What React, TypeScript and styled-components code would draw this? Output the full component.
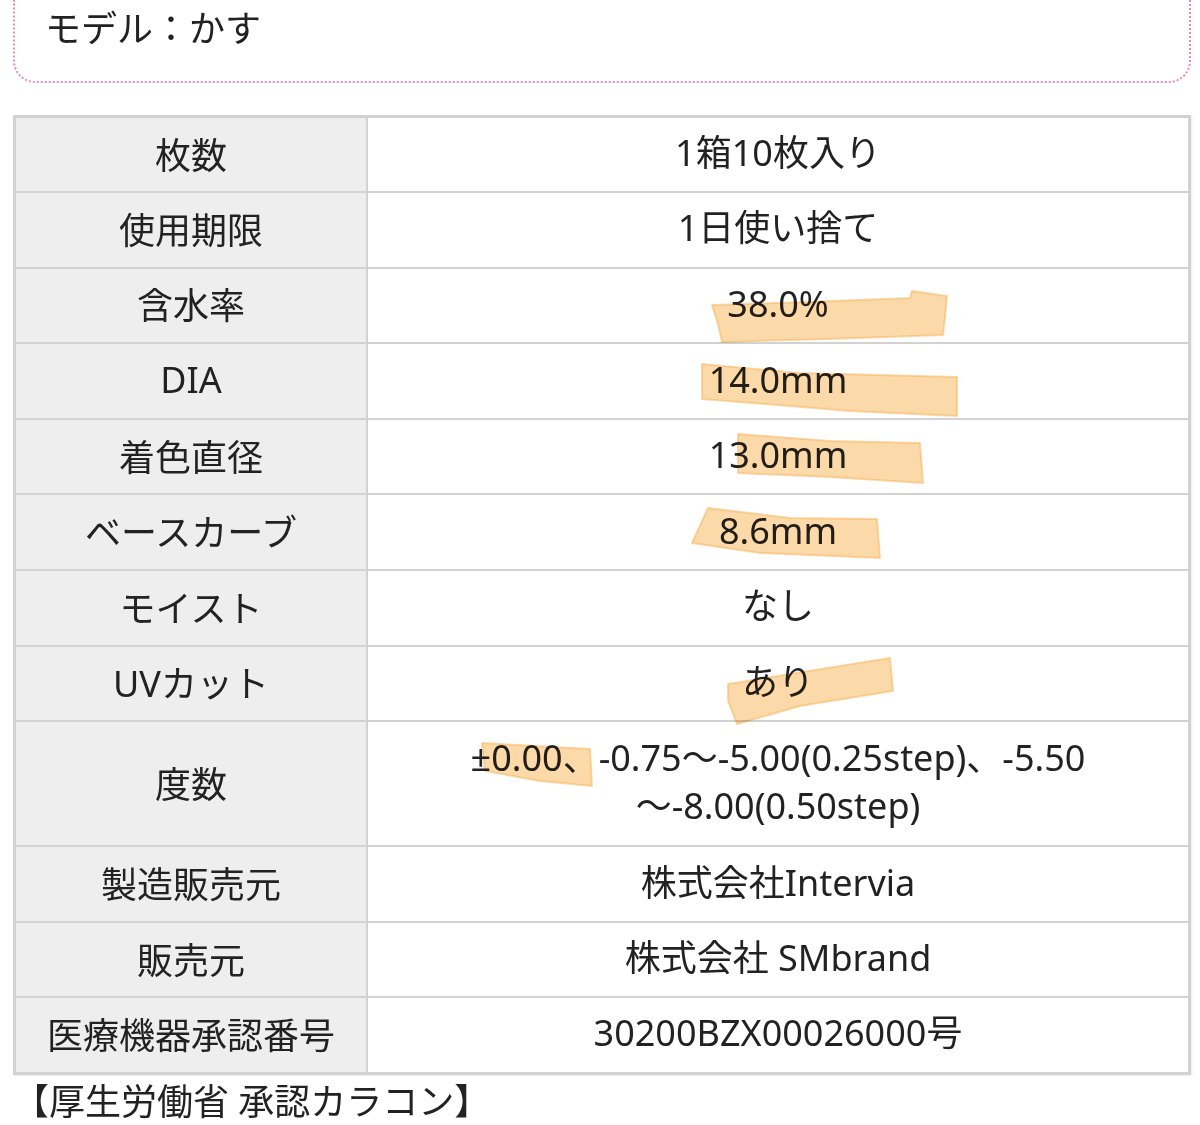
import React from 'react';
import styled, { createGlobalStyle } from 'styled-components';

const COLORS = {
    text: '#222222',
    label: '#eeeeee',
    line: '#d2d2d2',
    pink: '#e48bbd',
    marker: 'rgba(250, 186, 96, 0.55)',
    markerEdge: 'rgba(246, 170, 70, 0.45)',
};

const GlobalStyle = createGlobalStyle`
    html, body {
        margin: 0;
        padding: 0;
        background: #ffffff;
    }
    body {
        font-family: "Noto Sans", "Noto Sans CJK JP", sans-serif;
        color: ${COLORS.text};
    }
`;

const Page = styled.div`
    width: 1200px;
    padding: 0 9px 0 13px;
    box-sizing: border-box;
`;

const ModelBox = styled.div`
    border: 2px dotted ${COLORS.pink};
    border-top: none;
    border-radius: 0 0 22px 22px;
    padding: 5px 30px 0 30px;
    height: 83px;
    box-sizing: border-box;
    font-size: 36px;
    line-height: 48px;
`;

const SpecTable = styled.table`
    margin-top: 32px;
    width: 1178px;
    border-collapse: collapse;
    border: 3px solid ${COLORS.line};
    box-shadow: 1px 1px 2px rgba(0, 0, 0, 0.08);
    font-size: 36px;
`;

const Row = styled.tr<{ $tall?: boolean }>`
    height: ${(p) => (p.$tall ? 125 : 75.6)}px;
`;

const LabelCell = styled.th`
    width: 350px;
    background: ${COLORS.label};
    border: 2px solid ${COLORS.line};
    font-weight: 400;
    text-align: center;
    padding: 0 0 3px 0;
`;

const ValueCell = styled.td`
    position: relative;
    border: 2px solid ${COLORS.line};
    text-align: center;
    padding: 0 10px 3px 10px;
    line-height: 48px;
`;

const MarkerLayer = styled.svg`
    position: absolute;
    top: 0;
    left: 0;
    width: 100%;
    height: 100%;
    overflow: visible;
    pointer-events: none;
    mix-blend-mode: multiply;
`;

const Footer = styled.div`
    margin-top: 4px;
    font-size: 36px;
    line-height: 46px;
`;

interface Spec {
    label: string;
    value: React.ReactNode;
    marker?: string;
    tall?: boolean;
}

const SPECS: Spec[] = [
    { label: '枚数', value: '1箱10枚入り' },
    { label: '使用期限', value: '1日使い捨て' },
    {
        label: '含水率',
        value: '38.0%',
        marker: '344,36 440,33 542,29 544,22 579,27 577,48 575,66 460,70 354,73 350,55',
    },
    { label: 'DIA', value: '14.0mm', marker: '334,20 432,29 589,33 589,72 482,67 334,55' },
    { label: '着色直径', value: '13.0mm', marker: '370,14 462,21 552,23 555,63 462,57 370,53' },
    { label: 'ベースカーブ', value: '8.6mm', marker: '340,13 422,23 509,24 512,63 392,58 324,48' },
    { label: 'モイスト', value: 'なし' },
    { label: 'UVカット', value: 'あり', marker: '360,37 522,11 525,44 432,59 369,77 360,54' },
    {
        label: '度数',
        value: (
            <>
                ±0.00、-0.75～-5.00(0.25step)、-5.50
                <br />
                ～-8.00(0.50step)
            </>
        ),
        marker: '114,21 222,27 224,64 172,59 117,49',
        tall: true,
    },
    { label: '製造販売元', value: '株式会社Intervia' },
    { label: '販売元', value: '株式会社 SMbrand' },
    { label: '医療機器承認番号', value: '30200BZX00026000号' },
];

export default function App() {
    return (
        <>
            <GlobalStyle />
            <Page>
                <ModelBox>モデル：かす</ModelBox>

                <SpecTable>
                    <tbody>
                        {SPECS.map((spec) => (
                            <Row key={spec.label} $tall={spec.tall}>
                                <LabelCell>{spec.label}</LabelCell>
                                <ValueCell>
                                    {spec.value}
                                    {spec.marker && (
                                        <MarkerLayer>
                                            <polygon
                                                points={spec.marker}
                                                fill={COLORS.marker}
                                                stroke={COLORS.markerEdge}
                                                strokeWidth={2}
                                                strokeLinejoin="round"
                                            />
                                        </MarkerLayer>
                                    )}
                                </ValueCell>
                            </Row>
                        ))}
                    </tbody>
                </SpecTable>

                <Footer>【厚生労働省 承認カラコン】</Footer>
            </Page>
        </>
    );
}
